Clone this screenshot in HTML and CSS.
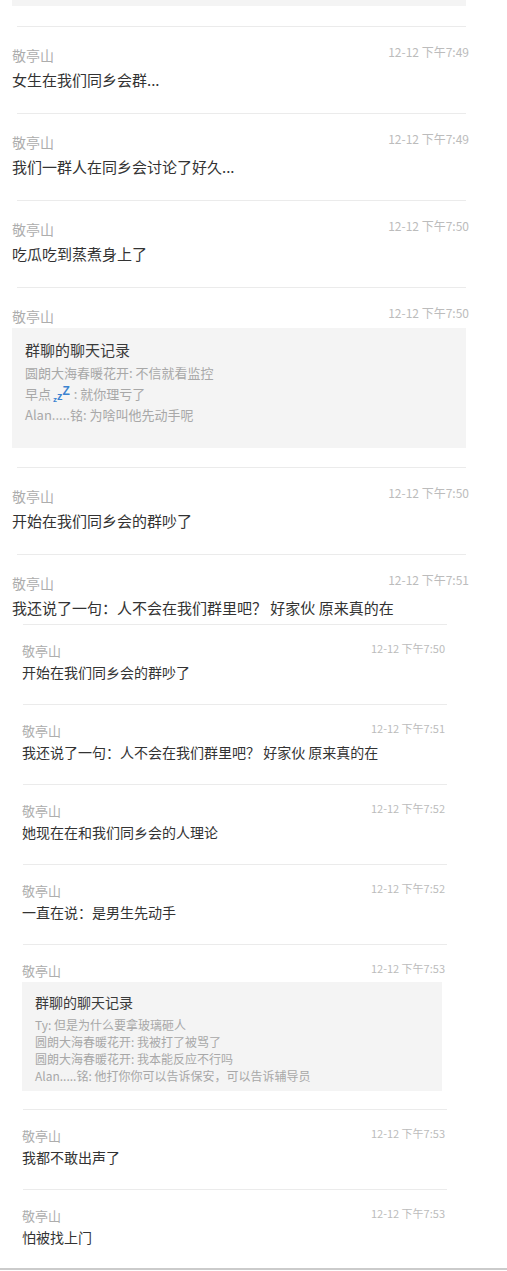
FILE: index.html
```html
<!DOCTYPE html>
<html lang="zh-CN">
<head>
<meta charset="utf-8">
<title>聊天记录</title>
<link rel="stylesheet" href="styles.css">
</head>
<body>
<div class="page">
  <section class="sheet sheet-a">
    <div class="box-tail"></div>
    <div class="sep"></div>
    <div class="item">
      <div class="head"><span class="name">敬亭山</span><span class="time">12-12 下午7:49</span></div>
      <div class="msg">女生在我们同乡会群...</div>
    </div>
    <div class="sep"></div>
    <div class="item">
      <div class="head"><span class="name">敬亭山</span><span class="time">12-12 下午7:49</span></div>
      <div class="msg">我们一群人在同乡会讨论了好久...</div>
    </div>
    <div class="sep"></div>
    <div class="item">
      <div class="head"><span class="name">敬亭山</span><span class="time">12-12 下午7:50</span></div>
      <div class="msg">吃瓜吃到蒸煮身上了</div>
    </div>
    <div class="sep"></div>
    <div class="item item-box">
      <div class="head"><span class="name">敬亭山</span><span class="time">12-12 下午7:50</span></div>
      <div class="record">
        <div class="record-title">群聊的聊天记录</div>
        <div class="record-line">圆朗大海春暖花开: 不信就看监控</div>
        <div class="record-line">早点<span class="zzz"><span class="z1">z</span><span class="z2">z</span><span class="z3">Z</span></span> : 就你理亏了</div>
        <div class="record-line">Alan.....铭: 为啥叫他先动手呢</div>
      </div>
    </div>
    <div class="sep"></div>
    <div class="item">
      <div class="head"><span class="name">敬亭山</span><span class="time">12-12 下午7:50</span></div>
      <div class="msg">开始在我们同乡会的群吵了</div>
    </div>
    <div class="sep"></div>
    <div class="item item-last">
      <div class="head"><span class="name">敬亭山</span><span class="time">12-12 下午7:51</span></div>
      <div class="msg">我还说了一句：人不会在我们群里吧？ 好家伙 原来真的在</div>
    </div>
  </section>

  <section class="sheet sheet-b">
    <div class="sep"></div>
    <div class="item">
      <div class="head"><span class="name">敬亭山</span><span class="time">12-12 下午7:50</span></div>
      <div class="msg">开始在我们同乡会的群吵了</div>
    </div>
    <div class="sep"></div>
    <div class="item">
      <div class="head"><span class="name">敬亭山</span><span class="time">12-12 下午7:51</span></div>
      <div class="msg">我还说了一句：人不会在我们群里吧？ 好家伙 原来真的在</div>
    </div>
    <div class="sep"></div>
    <div class="item">
      <div class="head"><span class="name">敬亭山</span><span class="time">12-12 下午7:52</span></div>
      <div class="msg">她现在在和我们同乡会的人理论</div>
    </div>
    <div class="sep"></div>
    <div class="item">
      <div class="head"><span class="name">敬亭山</span><span class="time">12-12 下午7:52</span></div>
      <div class="msg">一直在说：是男生先动手</div>
    </div>
    <div class="sep"></div>
    <div class="item item-box">
      <div class="head"><span class="name">敬亭山</span><span class="time">12-12 下午7:53</span></div>
      <div class="record">
        <div class="record-title">群聊的聊天记录</div>
        <div class="record-line">Ty: 但是为什么要拿玻璃砸人</div>
        <div class="record-line">圆朗大海春暖花开: 我被打了被骂了</div>
        <div class="record-line">圆朗大海春暖花开: 我本能反应不行吗</div>
        <div class="record-line">Alan.....铭: 他打你你可以告诉保安，可以告诉辅导员</div>
      </div>
    </div>
    <div class="sep"></div>
    <div class="item">
      <div class="head"><span class="name">敬亭山</span><span class="time">12-12 下午7:53</span></div>
      <div class="msg">我都不敢出声了</div>
    </div>
    <div class="sep"></div>
    <div class="item item-last">
      <div class="head"><span class="name">敬亭山</span><span class="time">12-12 下午7:53</span></div>
      <div class="msg">怕被找上门</div>
    </div>
  </section>
  <div class="baseline"></div>
</div>
</body>
</html>
```

FILE: styles.css
```css
html, body {
  margin: 0;
  padding: 0;
  background: #ffffff;
}

body {
  font-family: "Noto Sans CJK SC", "Noto Sans", sans-serif;
  color: #333333;
}

.page {
  width: 507px;
  height: 1271px;
  overflow: hidden;
  display: flex;
  flex-direction: column;
}

.sheet {
  display: flex;
  flex-direction: column;
}

.head {
  display: flex;
  justify-content: space-between;
  align-items: flex-start;
}

.name {
  color: #adadad;
}

.time {
  color: #bcbcbc;
  white-space: nowrap;
}

.msg {
  color: #333333;
  white-space: nowrap;
}

.record {
  background: #f4f4f4;
}

.record-title {
  color: #3a3a3a;
}

.record-line {
  color: #a8a8a8;
  white-space: nowrap;
}

.sep {
  height: 1px;
  background: #ebebeb;
}

/* ---------- upper screenshot ---------- */
.sheet-a {
  padding-left: 12px;
  width: 454px;
}

.sheet-a .box-tail {
  height: 6px;
  background: #f4f4f4;
  margin-bottom: 20px;
}

.sheet-a .sep {
  margin-left: 5px;
}

.sheet-a .item {
  padding: 18px 0 22px;
}

.sheet-a .name {
  font-size: 14px;
  line-height: 20px;
}

.sheet-a .time {
  font-size: 12px;
  line-height: 14px;
  margin-right: -3px;
}

.sheet-a .msg {
  font-size: 15px;
  line-height: 22px;
  margin-top: 4px;
}

.sheet-a .item-box {
  padding-bottom: 19px;
}

.sheet-a .record {
  margin-top: 2px;
  padding: 12px 13px 23px;
}

.sheet-a .record-title {
  font-size: 15px;
  line-height: 20px;
  margin-bottom: 2px;
}

.sheet-a .record-line {
  font-size: 13px;
  line-height: 21px;
}

.sheet-a .item-last {
  padding-bottom: 5px;
}

/* ---------- lower screenshot ---------- */
.sheet-b {
  padding-left: 22px;
  width: 425px;
}

.sheet-b .sep {
  margin-left: 1px;
}

.sheet-b .item {
  padding: 17px 0 22px;
}

.sheet-b .name {
  font-size: 13px;
  line-height: 18px;
}

.sheet-b .time {
  font-size: 11px;
  line-height: 12px;
  margin-right: 2px;
}

.sheet-b .msg {
  font-size: 14px;
  line-height: 20px;
  margin-top: 2px;
}

.sheet-b .item-box {
  padding-bottom: 18px;
}

.sheet-b .record {
  margin-top: 2px;
  margin-right: 5px;
  padding: 10px 13px 7px;
}

.sheet-b .record-title {
  font-size: 14px;
  line-height: 20px;
  margin-bottom: 4px;
}

.sheet-b .record-line {
  font-size: 12px;
  line-height: 17px;
}

.sheet-b .item-last {
  padding-bottom: 21px;
}

.baseline {
  height: 2px;
  background: #cbcbcb;
  flex: none;
}

/* sleeping emoji letters */
.zzz {
  display: inline-block;
  font-family: "Liberation Sans", "DejaVu Sans", sans-serif;
  font-weight: 700;
  color: #3b83d0;
  margin: 0 1px 0 2px;
  line-height: 1;
}

.z1 {
  font-size: 8px;
  vertical-align: -3px;
}

.z2 {
  font-size: 11px;
  vertical-align: -1px;
}

.z3 {
  font-size: 12px;
  vertical-align: 4px;
}
```
